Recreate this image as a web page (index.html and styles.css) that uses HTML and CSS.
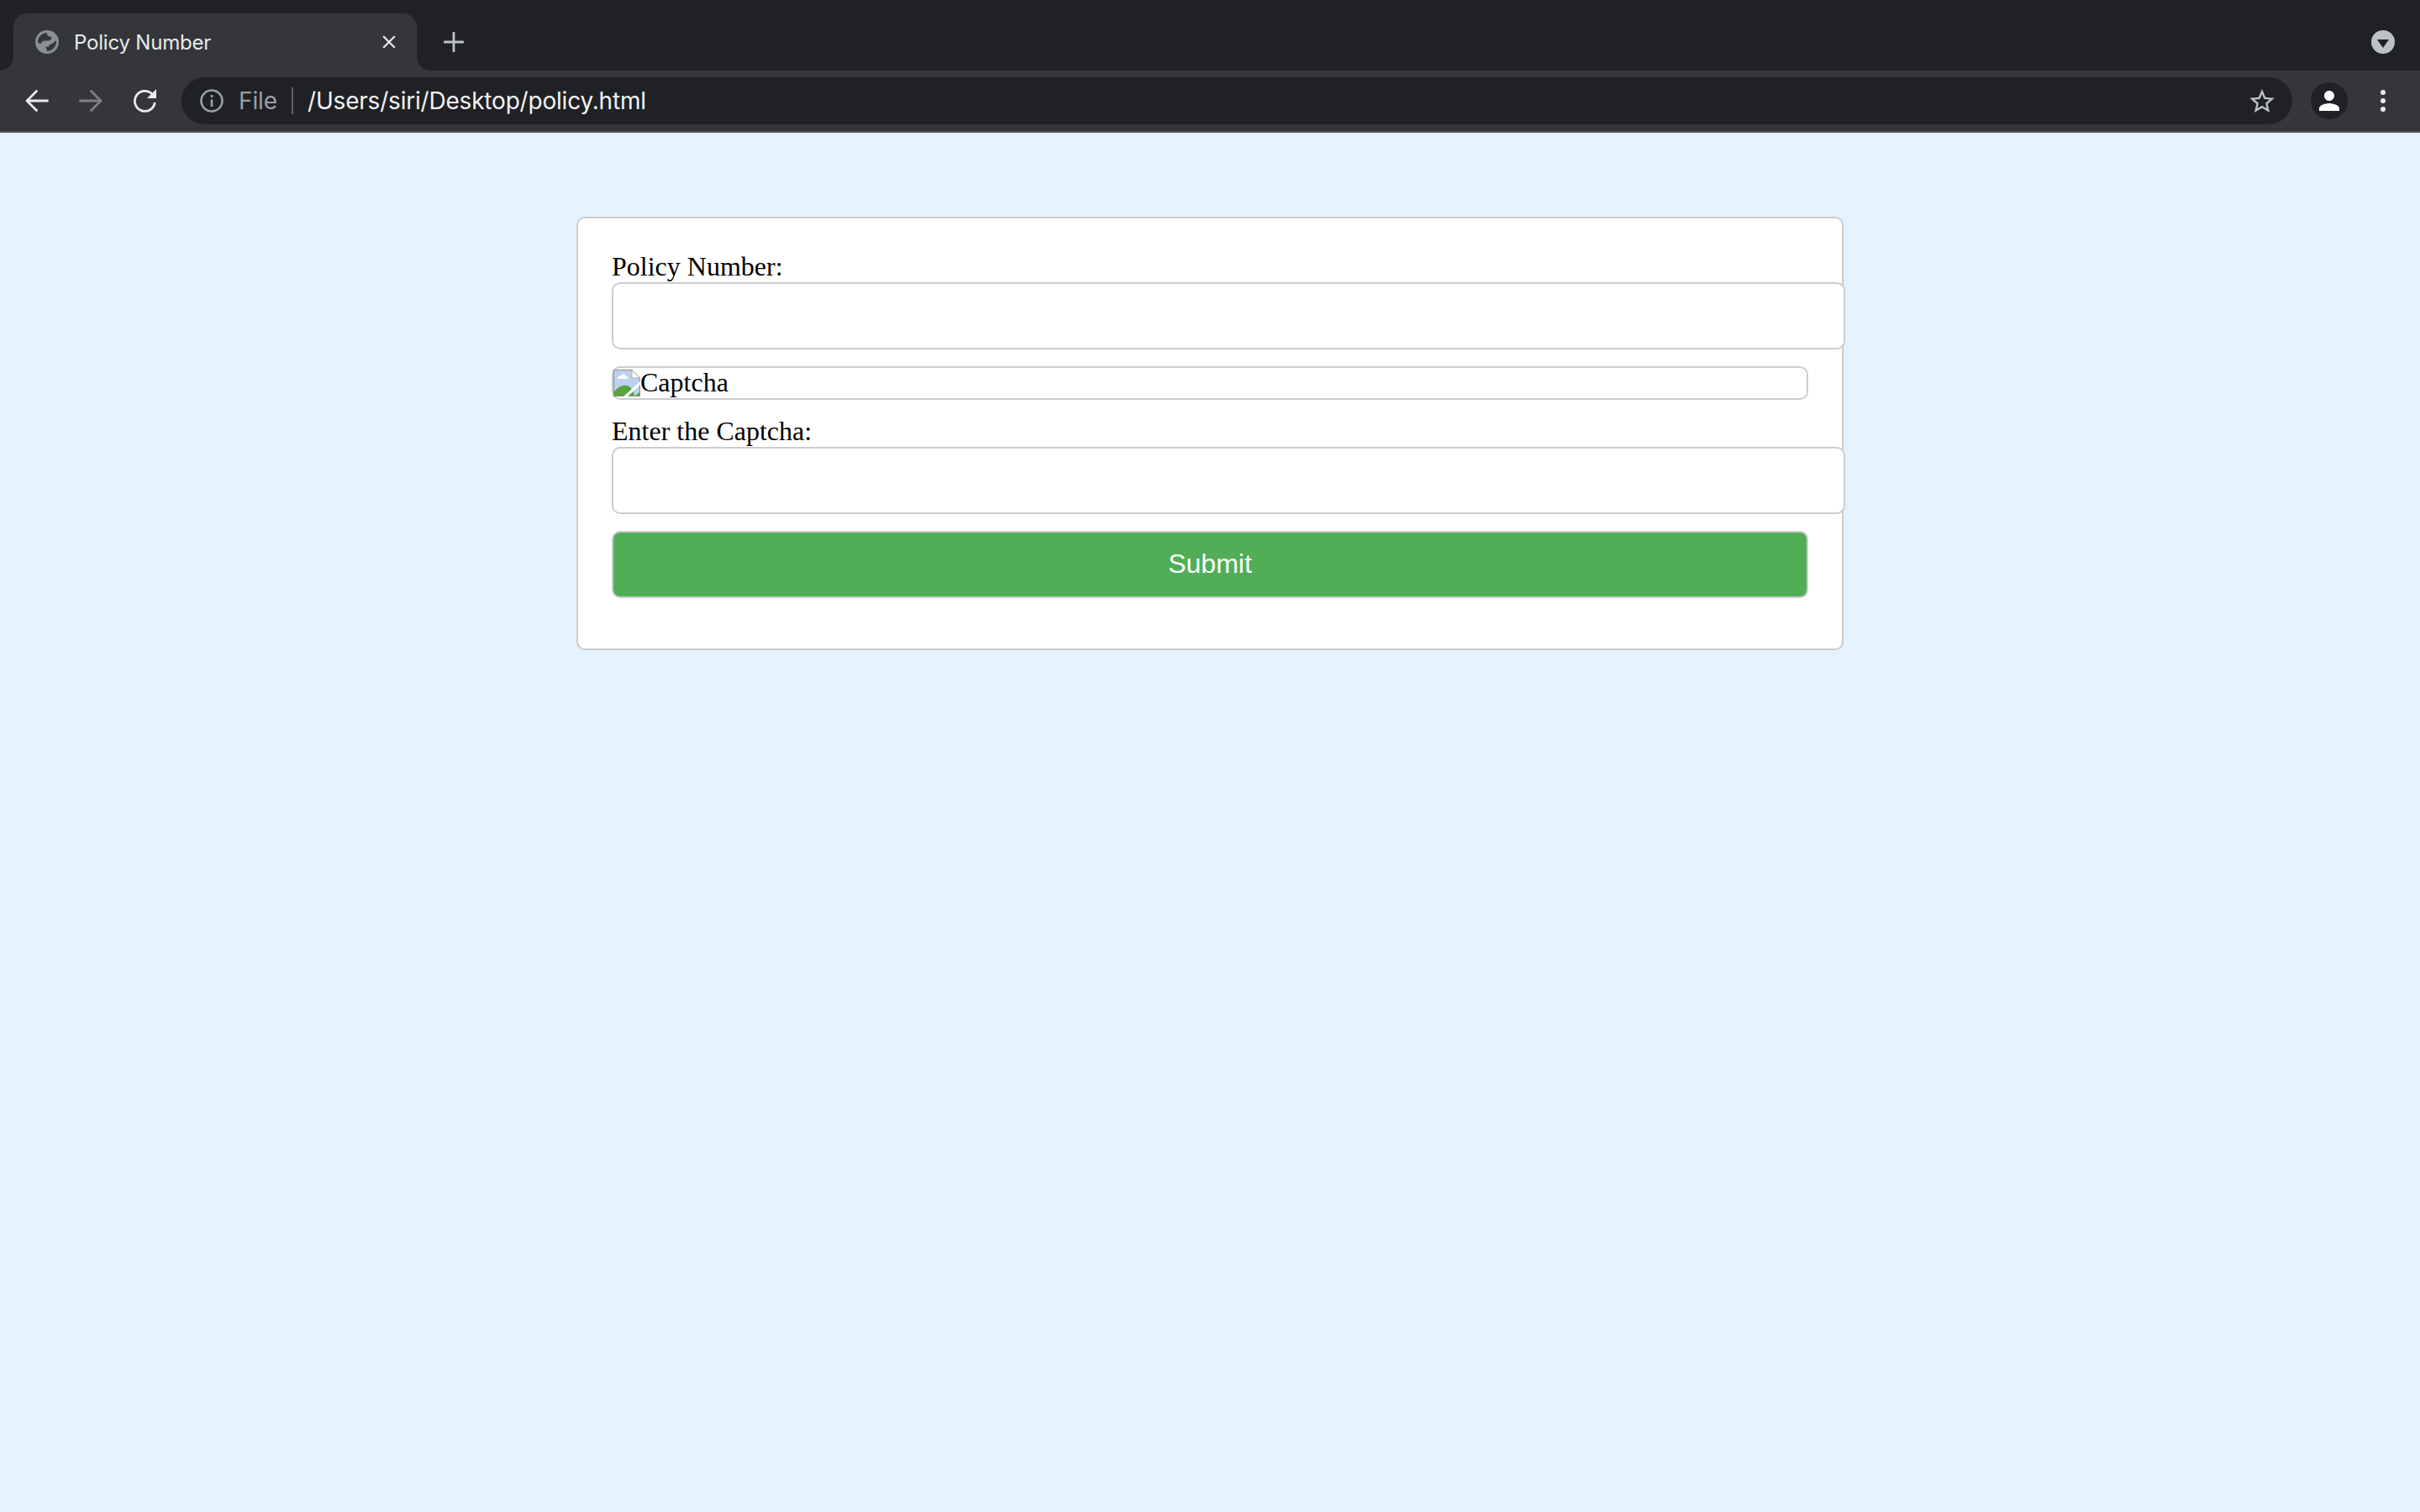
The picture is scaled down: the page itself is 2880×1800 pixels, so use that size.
FILE: index.html
```html
<!DOCTYPE html>
<html lang="en">
<head>
    <meta charset="UTF-8">
    <title>Policy Number</title>
    <link rel="stylesheet" href="styles.css">
</head>
<body>
    <div class="browser">
        <div class="tab-strip">
            <div class="tab">
                <svg class="favicon" viewBox="0 0 28 28">
                    <circle cx="14" cy="14" r="14" fill="#8b9094"/>
                    <path d="M3 14C3 8 8 3.500 14 3C13 6 16 7.500 19 8C20 11 17 13 14 12.500C10 12 7 13 7 16C5 16 4 15 3 14Z" fill="#35363a"/>
                    <path d="M25 12C25.500 19 21 24.500 14 25C14 22 12 21 12 19C15 21 17 19 17 17C20 17 22 14 25 12Z" fill="#35363a"/>
                </svg>
                <span class="tab-title">Policy Number</span>
                <svg class="tab-close" viewBox="0 0 18 18">
                    <path d="M2 2L16 16M16 2L2 16"/>
                </svg>
            </div>
            <svg class="new-tab" viewBox="0 0 24 24">
                <path d="M12 1V23M1 12H23"/>
            </svg>
            <div class="tab-search">
                <span class="tab-search-arrow"></span>
            </div>
        </div>
        <div class="toolbar">
            <div class="nav-btn">
                <svg class="nav-icon" viewBox="0 0 28 28"><path d="M26.500 14H3M13.500 2.500L2 14L13.500 25.500"/></svg>
            </div>
            <div class="nav-btn">
                <svg class="nav-icon off" viewBox="0 0 28 28"><path d="M1.500 14H25M14.500 2.500L26 14L14.500 25.500"/></svg>
            </div>
            <div class="nav-btn">
                <svg class="reload" viewBox="-1 0 28 28">
                    <path class="reload-arc" d="M22 6A12 12 0 1 0 25.300 16"/>
                    <path class="reload-head" d="M27 0V11H16Z"/>
                </svg>
            </div>
            <div class="omnibox">
                <svg class="info" viewBox="0 0 28 28">
                    <circle cx="14" cy="14" r="12.500"/>
                    <path d="M14 12.500V21M14 7V10"/>
                </svg>
                <span class="scheme">File</span>
                <span class="divider"></span>
                <span class="url">/Users/siri/Desktop/policy.html</span>
                <svg class="star" viewBox="2 2 20 19"><path d="M22 9.240l-7.190-.620L12 2 9.190 8.630 2 9.240l5.460 4.730L5.820 21 12 17.270 18.180 21l-1.630-7.030L22 9.240zM12 15.400l-3.760 2.270 1-4.280-3.320-2.880 4.380-.380L12 6.100l1.710 4.040 4.380.380-3.320 2.880 1 4.280L12 15.400z"/></svg>
            </div>
            <div class="nav-btn first-right">
                <div class="avatar">
                    <svg class="person" viewBox="4 4 16 16"><path d="M12 12c2.210 0 4-1.790 4-4s-1.790-4-4-4-4 1.790-4 4 1.790 4 4 4zm0 2c-2.670 0-8 1.340-8 4v2h16v-2c0-2.660-5.330-4-8-4z"/></svg>
                </div>
            </div>
            <div class="nav-btn">
                <div class="dots"><i></i><i></i><i></i></div>
            </div>
        </div>
    </div>

    <main class="page">
        <form class="card">
            <label class="field-label" for="policy">Policy Number:</label>
            <input class="field" id="policy" type="text">

            <div class="captcha">
                <svg class="broken-img" viewBox="0 0 32 32">
                    <path d="M.500.500H22L31.500 10V31.500H.500Z" fill="#bdd1f0" stroke="#8f8f8f"/>
                    <path d="M22 .500V10H31.500Z" fill="#fff" stroke="#aaa"/>
                    <path d="M5 11C5 8 8 7 9 7C10 4 15 5 15 8C17 8 18 10 17 11Z" fill="#fff"/>
                    <path d="M1 31V26C6 20 11 18 16 19C20 20 23 23 25 31Z" fill="#55a63c"/>
                    <path d="M26 31L31 27V31Z" fill="#55a63c"/>
                    <path d="M12 32L32 14V18L17 32Z" fill="#fff"/>
                </svg><span class="alt-text">Captcha</span>
            </div>

            <label class="field-label" for="code">Enter the Captcha:</label>
            <input class="field" id="code" type="text">

            <button class="submit" type="button">Submit</button>
        </form>
    </main>
</body>
</html>
```

FILE: styles.css
```css
* {
    margin: 0;
}

body {
    background: #e4f2fd;
    font-family: "Liberation Serif", serif;
    font-size: 32px;
    color: black;
    min-height: 1800px;
}

/* browser chrome */
.browser {
    font-family: Inter, "Liberation Sans", sans-serif;
}

.tab-strip {
    display: flex;
    align-items: flex-start;
    height: 84px;
    box-sizing: border-box;
    padding: 16px 30px 0 16px;
    background: #202124;
}

.tab {
    position: relative;
    display: flex;
    align-items: center;
    box-sizing: border-box;
    width: 480px;
    height: 68px;
    padding: 0 25px 0 26px;
    background: #35363a;
    border-radius: 16px 16px 0 0;
}

.tab::before,
.tab::after {
    content: "";
    position: absolute;
    bottom: 0;
    width: 16px;
    height: 16px;
}

.tab::before {
    left: -16px;
    background: radial-gradient(circle at 0 0, #202124 15.500px, #35363a 16px);
}

.tab::after {
    right: -16px;
    background: radial-gradient(circle at 100% 0, #202124 15.500px, #35363a 16px);
}

.favicon {
    width: 28px;
    height: 28px;
    margin-right: 18px;
}

.tab-title {
    flex: 1;
    font-size: 24px;
    letter-spacing: -0.2px;
    color: #e8eaed;
}

.tab-close {
    width: 16px;
    height: 16px;
    fill: none;
    stroke: #e8eaed;
    stroke-width: 2.500;
    stroke-linecap: round;
}

.new-tab {
    width: 24px;
    height: 24px;
    margin: 22px 0 0 32px;
    fill: none;
    stroke: #bdc1c6;
    stroke-width: 2.800;
    stroke-linecap: round;
}

.tab-search {
    display: flex;
    align-items: center;
    justify-content: center;
    width: 28px;
    height: 28px;
    margin: 20px 0 0 auto;
    border-radius: 50%;
    background: #bdc1c6;
}

.tab-search-arrow {
    width: 0;
    height: 0;
    margin-top: 3px;
    border-left: 7px solid transparent;
    border-right: 7px solid transparent;
    border-top: 10px solid #202124;
}

.toolbar {
    display: flex;
    align-items: center;
    height: 74px;
    box-sizing: border-box;
    padding: 0 12px;
    background: #35363a;
    border-bottom: 2px solid #55565a;
}

.nav-btn {
    display: flex;
    align-items: center;
    justify-content: center;
    width: 64px;
    height: 64px;
}

.first-right {
    margin-left: 12px;
}

.nav-icon {
    width: 28px;
    height: 28px;
    fill: none;
    stroke: #e8eaed;
    stroke-width: 2.800;
    stroke-linecap: round;
    stroke-linejoin: round;
}

.nav-icon.off {
    stroke: #7f8083;
}

.reload {
    width: 28px;
    height: 28px;
}

.reload-arc {
    fill: none;
    stroke: #e8eaed;
    stroke-width: 2.800;
}

.reload-head {
    fill: #e8eaed;
}

.omnibox {
    flex: 1;
    display: flex;
    align-items: center;
    height: 56px;
    margin-left: 12px;
    padding: 0 21px 0 22px;
    background: #202124;
    border-radius: 28px;
}

.info {
    width: 28px;
    height: 28px;
    margin-right: 18px;
    fill: none;
    stroke: #9aa0a6;
    stroke-width: 2.600;
}

.scheme {
    font-size: 28px;
    letter-spacing: -0.1px;
    color: #9aa0a6;
}

.divider {
    width: 2px;
    height: 32px;
    margin: 0 17px 0 17px;
    background: #5f6368;
}

.url {
    flex: 1;
    font-size: 28px;
    letter-spacing: -0.2px;
    color: #f1f3f4;
}

.star {
    width: 30px;
    height: 28px;
    fill: #bdc1c6;
}

.avatar {
    display: flex;
    align-items: center;
    justify-content: center;
    width: 44px;
    height: 44px;
    border-radius: 50%;
    background: #202124;
}

.person {
    width: 24px;
    height: 24px;
    fill: white;
}

.dots {
    display: flex;
    flex-direction: column;
    gap: 4px;
}

.dots i {
    display: block;
    width: 6px;
    height: 6px;
    border-radius: 50%;
    background: #e8eaed;
}

/* page */
.page {
    padding-top: 100px;
}

.card {
    width: 1424px;
    margin: 0 auto;
    padding: 40px;
    background: white;
    border: 2px solid #ccc;
    border-radius: 10px;
}

.field-label {
    display: block;
    height: 36px;
    line-height: 34px;
}

.field {
    display: block;
    width: 100%;
    height: 36px;
    padding: 20px;
    margin-bottom: 20px;
    background: white;
    border: 2px solid #ccc;
    border-radius: 10px;
    font-size: 32px;
    outline: none;
}

.captcha {
    display: flex;
    align-items: center;
    box-sizing: border-box;
    height: 40px;
    margin-bottom: 20px;
    border: 2px solid #ccc;
    border-radius: 10px;
    line-height: 36px;
}

.broken-img {
    flex: none;
    width: 32px;
    height: 32px;
}

.alt-text {
    padding-bottom: 2px;
}

.submit {
    display: block;
    box-sizing: border-box;
    width: 100%;
    height: 80px;
    margin-bottom: 20px;
    padding-bottom: 2px;
    background: #51ae57;
    border: 2px solid #ccc;
    border-radius: 10px;
    font-family: "Liberation Sans", sans-serif;
    font-size: 32px;
    color: white;
}
```
